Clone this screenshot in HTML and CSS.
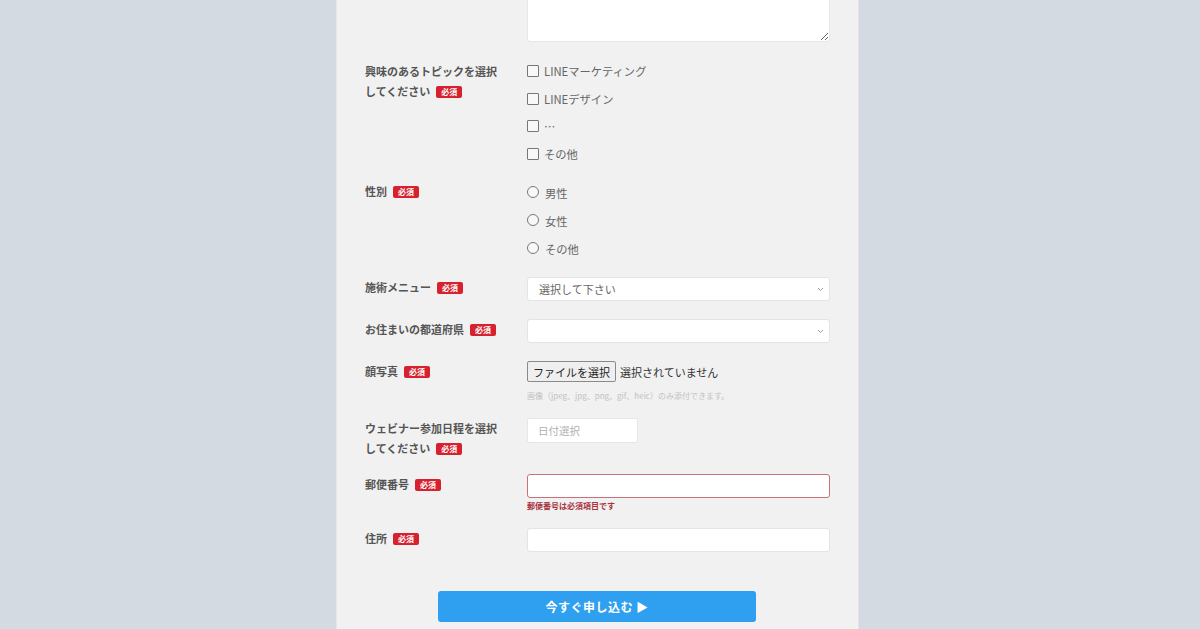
FILE: index.html
```html
<!DOCTYPE html>
<html lang="ja">
<head>
<meta charset="utf-8">
<title>お申し込みフォーム</title>
<link rel="stylesheet" href="styles.css">
</head>
<body>
<div class="page">
  <div class="panel">
    <form class="form">
      <div class="row row--textarea">
        <div class="label"></div>
        <div class="control"><textarea class="textarea"></textarea></div>
      </div>

      <div class="row row--list">
        <div class="label label--pad">興味のあるトピックを選択<br>してください<span class="badge">必須</span></div>
        <div class="control">
          <label class="opt"><span class="check"></span>LINEマーケティング</label>
          <label class="opt"><span class="check"></span>LINEデザイン</label>
          <label class="opt"><span class="check"></span>…</label>
          <label class="opt"><span class="check"></span>その他</label>
        </div>
      </div>

      <div class="row row--radio">
        <div class="label label--pad-sm">性別<span class="badge">必須</span></div>
        <div class="control">
          <label class="opt opt--radio"><span class="radio"></span>男性</label>
          <label class="opt opt--radio"><span class="radio"></span>女性</label>
          <label class="opt opt--radio"><span class="radio"></span>その他</label>
        </div>
      </div>

      <div class="row row--select">
        <div class="label">施術メニュー<span class="badge">必須</span></div>
        <div class="control"><div class="select"><span>選択して下さい</span><svg class="chev" width="7" height="5" viewBox="0 0 7 5"><path d="M1 1l2.5 2.5L6 1" fill="none" stroke="#999" stroke-width="1"/></svg></div></div>
      </div>

      <div class="row row--select">
        <div class="label">お住まいの都道府県<span class="badge">必須</span></div>
        <div class="control"><div class="select"><span></span><svg class="chev" width="7" height="5" viewBox="0 0 7 5"><path d="M1 1l2.5 2.5L6 1" fill="none" stroke="#999" stroke-width="1"/></svg></div></div>
      </div>

      <div class="row row--file">
        <div class="label">顔写真<span class="badge">必須</span></div>
        <div class="control">
          <div class="file"><span class="file-btn">ファイルを選択</span><span class="file-name">選択されていません</span></div>
          <p class="hint">画像（jpeg、jpg、png、gif、heic）のみ添付できます。</p>
        </div>
      </div>

      <div class="row row--date">
        <div class="label">ウェビナー参加日程を選択<br>してください<span class="badge">必須</span></div>
        <div class="control"><div class="date">日付選択</div></div>
      </div>

      <div class="row row--zip">
        <div class="label">郵便番号<span class="badge">必須</span></div>
        <div class="control">
          <div class="input input--error"></div>
          <p class="error">郵便番号は必須項目です</p>
        </div>
      </div>

      <div class="row row--addr">
        <div class="label">住所<span class="badge">必須</span></div>
        <div class="control"><div class="input"></div></div>
      </div>

      <div class="submit-wrap">
        <button type="button" class="submit">今すぐ申し込む ▶</button>
      </div>
    </form>
  </div>
</div>
</body>
</html>
```
FILE: styles.css
```css
* { box-sizing: border-box; }
html, body {
  margin: 0;
  height: 629px;
  overflow: hidden;
  background: #d4dae2;
  font-family: "Noto Sans CJK JP", "Noto Sans", sans-serif;
}
.page {
  padding-left: 336px;
  height: 629px;
}
.panel {
  width: 523px;
  height: 629px;
  background: #f1f1f1;
  border-left: 1px solid #e6e7ea;
  border-right: 1px solid #e3e4e7;
  padding: 0 27px 0 28px;
  overflow: hidden;
}
.form {
  margin-top: -58px;
}
.row {
  display: grid;
  grid-template-columns: 162px 303px;
  margin-bottom: 16px;
}
.row--textarea { margin-bottom: 15px; }
.row--list { margin-bottom: 11px; }
.row--radio { margin-bottom: 14px; }
.row--select { margin-bottom: 18px; }
.row--file { margin-bottom: 15px; }
.row--date { margin-bottom: 16px; }
.row--zip { margin-bottom: 15px; }
.row--addr { margin-bottom: 39px; }

.label {
  font-size: 11px;
  line-height: 20px;
  font-weight: bold;
  color: #555;
}
.label--pad { padding-top: 4px; }
.label--pad-sm { padding-top: 2px; }
.badge {
  display: inline-block;
  background: #d6222e;
  color: #fff;
  font-size: 8px;
  line-height: 12px;
  padding: 0 5px;
  border-radius: 2px;
  margin-left: 6px;
  vertical-align: 1px;
  font-weight: bold;
}
.textarea {
  display: block;
  width: 303px;
  height: 100px;
  background: #fff;
  border: 1px solid #e6e6e6;
  border-radius: 3px;
  margin: 0;
}
.opt {
  display: flex;
  align-items: center;
  height: 27.8px;
  gap: 5px;
  font-size: 11.3px;
  color: #666;
}
.opt--radio { height: 28px; }
.check {
  width: 12px;
  height: 12px;
  border: 1.5px solid #777;
  background: #f8f8f8;
  border-radius: 1px;
  flex: none;
}
.radio {
  width: 12px;
  height: 12px;
  border: 1.5px solid #777;
  border-radius: 50%;
  background: #f8f8f8;
  flex: none;
  margin-right: 1px;
  margin-top: -3px;
}
.select {
  height: 24px;
  background: #fff;
  border: 1px solid #e4e4e4;
  border-radius: 3px;
  display: flex;
  align-items: center;
  justify-content: space-between;
  padding: 0 5px 0 11px;
  font-size: 11px;
  color: #666;
}
.chev { flex: none; }
.file {
  display: flex;
  align-items: center;
  gap: 4px;
}
.file-btn {
  height: 21px;
  padding: 0 5px;
  display: flex;
  align-items: center;
  background: #efefef;
  border: 1px solid #8a8a8a;
  border-radius: 2px;
  font-size: 11px;
  color: #222;
}
.file-name {
  font-size: 11px;
  color: #333;
}
.hint {
  margin: 7px 0 0;
  font-size: 8px;
  line-height: 14px;
  color: #c2c2c2;
}
.date {
  width: 111px;
  height: 25px;
  background: #fff;
  border: 1px solid #e6e6e6;
  border-radius: 2px;
  font-size: 10.5px;
  color: #b0b0b0;
  display: flex;
  align-items: center;
  padding-left: 10px;
}
.input {
  height: 24px;
  background: #fff;
  border: 1px solid #e4e4e4;
  border-radius: 3px;
}
.input--error {
  border-color: #c9707a;
}
.error {
  margin: 1px 0 0;
  font-size: 8px;
  line-height: 14px;
  font-weight: bold;
  color: #a83440;
}
.submit-wrap {
  display: flex;
  justify-content: center;
  padding-right: 2px;
}
.submit {
  width: 318px;
  height: 31px;
  border: 0;
  border-radius: 3px;
  background: #2fa0f0;
  color: #fff;
  font-family: "Noto Sans CJK JP", sans-serif;
  font-size: 12px;
  font-weight: bold;
  letter-spacing: 0.5px;
}
```
